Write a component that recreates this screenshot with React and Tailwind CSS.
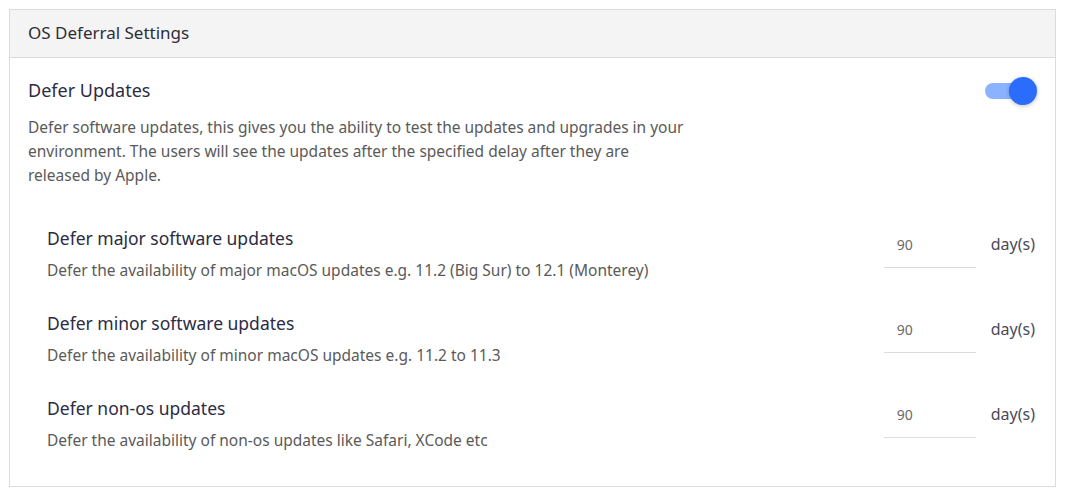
import React from "react";

const rows = [
  {
    title: "Defer major software updates",
    desc: "Defer the availability of major macOS updates e.g. 11.2 (Big Sur) to 12.1 (Monterey)",
  },
  {
    title: "Defer minor software updates",
    desc: "Defer the availability of minor macOS updates e.g. 11.2 to 11.3",
  },
  {
    title: "Defer non-os updates",
    desc: "Defer the availability of non-os updates like Safari, XCode etc",
  },
];

export default function App() {
  return (
    <div
      className="w-[1066px] h-[490px] bg-white pt-[9px] pl-[9px] pr-[10px]"
      style={{ fontFamily: "'Noto Sans', 'Open Sans', sans-serif" }}
    >
      <div className="border border-[#dcdcdc] h-[478px] flex flex-col">
        <div className="h-[48px] bg-[#f4f4f4] border-b border-[#dcdcdc] flex items-center pl-[18px] pb-[2px] text-[17px] text-[#2d2d3a]">
          OS Deferral Settings
        </div>
        <div className="flex-1 pl-[18px] pr-[18px]">
          <div className="flex justify-between pt-[20px]">
            <div>
              <div className="text-[18px] leading-[24px] text-[#2c2c44]">Defer Updates</div>
              <p className="mt-[13px] w-[662px] text-[15.5px] leading-[24px] text-[#5a5a5a]">
                Defer software updates, this gives you the ability to test the updates and upgrades in your
                environment. The users will see the updates after the specified delay after they are
                released by Apple.
              </p>
            </div>
            <div className="relative w-[52px] h-[28px] mt-[-1px]">
              <div className="absolute left-[0px] top-[6px] w-[46px] h-[16px] rounded-full bg-[#8ab2ff]" />
              <div className="absolute right-[0px] top-[0px] w-[28px] h-[28px] rounded-full bg-[#2a6cfc] shadow-[0_1px_4px_rgba(0,0,0,0.25)]" />
            </div>
          </div>
          <div className="mt-[39px] pl-[19px] pr-[2px] flex flex-col gap-[31px]">
            {rows.map((r) => (
              <div key={r.title} className="flex justify-between">
                <div>
                  <div className="text-[17.5px] leading-[24px] text-[#2c2c44]">{r.title}</div>
                  <div className="mt-[10px] text-[15.5px] leading-[20px] text-[#5a5a5a]">{r.desc}</div>
                </div>
                <div className="flex items-start">
                  <div className="w-[92px] h-[42px] border-b border-[#dcdcdc] pt-[9px] pl-[13px] text-[14px] leading-[20px] text-[#6a6a6a]">
                    90
                  </div>
                  <div className="ml-[15px] mt-[6px] text-[16px] leading-[24px] text-[#4a4a5a]">day(s)</div>
                </div>
              </div>
            ))}
          </div>
        </div>
      </div>
    </div>
  );
}
